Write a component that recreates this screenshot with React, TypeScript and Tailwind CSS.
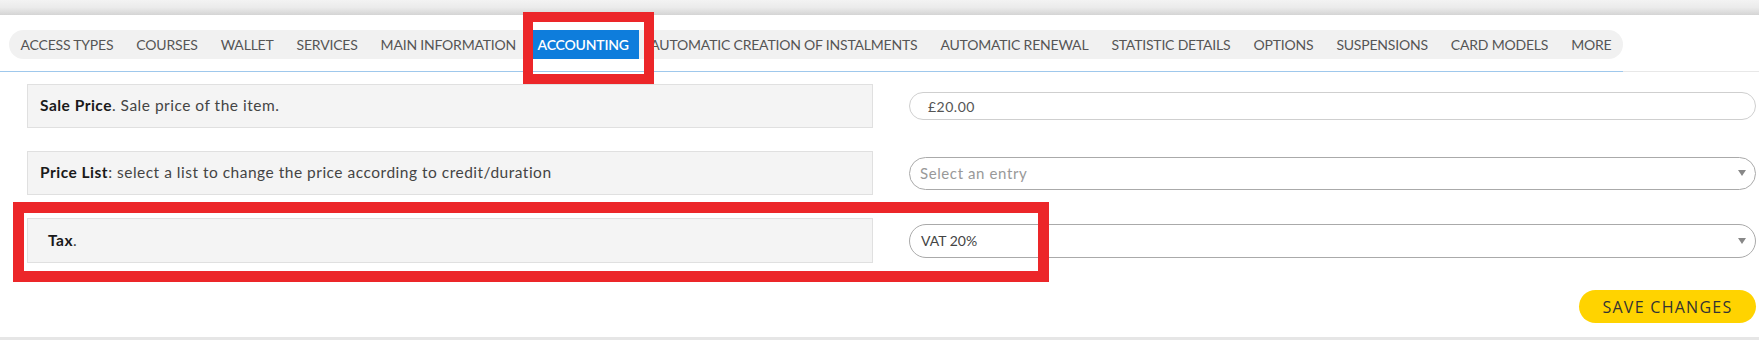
import React from 'react';

const tabs = [
    'ACCESS TYPES',
    'COURSES',
    'WALLET',
    'SERVICES',
    'MAIN INFORMATION',
    'ACCOUNTING',
    'AUTOMATIC CREATION OF INSTALMENTS',
    'AUTOMATIC RENEWAL',
    'STATISTIC DETAILS',
    'OPTIONS',
    'SUSPENSIONS',
    'CARD MODELS',
    'MORE',
];

const Arrow = () => (
    <svg width="8" height="6" viewBox="0 0 8 6" className="text-[#888]">
        <path d="M0 0 L8 0 L4 6 Z" fill="currentColor" />
    </svg>
);

const App: React.FC = () => {
    return (
        <div className="relative w-[1759px] h-[340px] bg-white overflow-hidden font-['Lato',sans-serif]">
            {/* top shadow band */}
            <div className="h-[15px] bg-gradient-to-b from-[#f3f3f3] via-[#ebebeb] to-[#d4d4d4]" />

            {/* tab bar */}
            <div className="flex border-b border-[#e8e8e8]">
                <div className="pl-[9px] pt-[15px] pb-[12px] border-b border-[#9fc8ec] -mb-px">
                    <div className="flex h-[29px] items-stretch rounded-full bg-[#f1f1f1] text-[14px] tracking-[-0.2px] text-[#555]">
                        {tabs.map((t) => (
                            <div
                                key={t}
                                className={
                                    t === 'ACCOUNTING'
                                        ? 'flex items-center px-[10px] bg-[#0e7ddc] text-white font-semibold'
                                        : 'flex items-center px-[11.5px]'
                                }
                            >
                                {t}
                            </div>
                        ))}
                    </div>
                </div>
            </div>

            {/* form rows */}
            <div className="pl-[27px] pr-[3px] pt-[12px]">
                <div className="grid grid-cols-[846px_1fr] gap-x-[36px] items-center">
                    <div className="h-[44px] flex items-center pl-[12px] bg-[#f4f4f4] border border-[#e0e0e0] text-[15.5px] tracking-[0.5px] text-[#444]">
                        <span className="font-bold text-[#1a1a1a]">Sale Price</span>. Sale price of the item.
                    </div>
                    <div className="h-[28px] flex items-center pl-[18px] rounded-full border border-[#cfcfcf] text-[14px] tracking-[0.5px] text-[#555]">
                        £20.00
                    </div>
                </div>

                <div className="grid grid-cols-[846px_1fr] gap-x-[36px] items-center mt-[23px]">
                    <div className="h-[44px] flex items-center pl-[12px] bg-[#f4f4f4] border border-[#e0e0e0] text-[15.5px] tracking-[0.5px] text-[#444]">
                        <span className="font-bold text-[#1a1a1a]">Price List</span>: select a list to change the price according to credit/duration
                    </div>
                    <div className="h-[33px] flex items-center justify-between pl-[10px] pr-[9px] rounded-full border border-[#aaaaaa] text-[15px] tracking-[0.6px] text-[#999]">
                        <span>Select an entry</span>
                        <Arrow />
                    </div>
                </div>

                <div className="grid grid-cols-[846px_1fr] gap-x-[36px] items-center mt-[23px]">
                    <div className="h-[45px] flex items-center pl-[20px] bg-[#f4f4f4] border border-[#e0e0e0] text-[15.5px] tracking-[0.5px] text-[#444]">
                        <span className="font-bold text-[#1a1a1a]">Tax</span>.
                    </div>
                    <div className="h-[34px] flex items-center justify-between pl-[11px] pr-[9px] rounded-full border border-[#aaaaaa] text-[14px] text-[#444]">
                        <span>VAT 20%</span>
                        <Arrow />
                    </div>
                </div>

                <div className="flex justify-end mt-[27px]">
                    <button className="h-[33px] w-[177px] rounded-full bg-[#ffd300] text-[16px] tracking-[0.08em] text-[#333] font-['Open_Sans',sans-serif]">
                        SAVE CHANGES
                    </button>
                </div>
            </div>

            <div className="absolute bottom-0 left-0 right-0 h-[3px] bg-[#e6e6e6]" />

            {/* annotation boxes */}
            <div className="absolute left-[523px] top-[12px] w-[131px] h-[72px] border-[10px] border-[#ec2629]" />
            <div className="absolute left-[13px] top-[202px] w-[1036px] h-[80px] border-[11px] border-[#ec2629]" />
        </div>
    );
};

export default App;
